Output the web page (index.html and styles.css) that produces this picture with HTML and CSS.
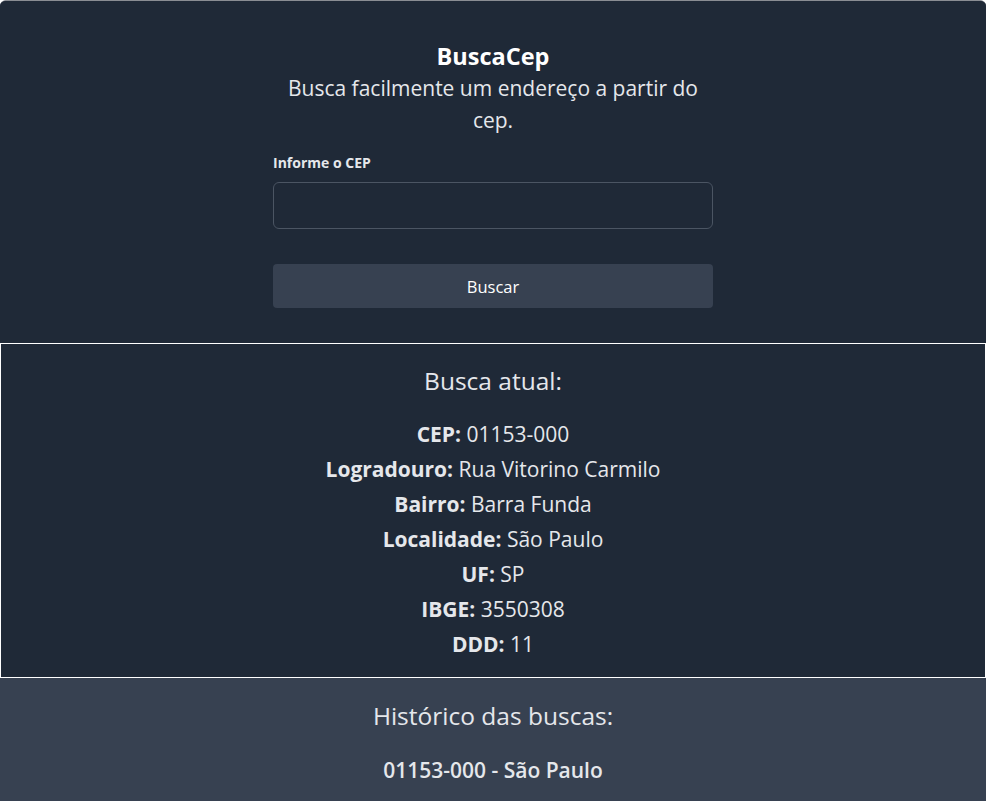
FILE: index.html
```html
<!DOCTYPE html>
<html lang="pt-BR">
<head>
<meta charset="utf-8">
<title>BuscaCep</title>
<link rel="stylesheet" href="styles.css">
</head>
<body>
<main class="app">
  <section class="hero">
    <div class="hero-inner">
      <h1 class="title">BuscaCep</h1>
      <p class="subtitle">Busca facilmente um endereço a partir do cep.</p>
      <form class="form">
        <label class="label" for="cep">Informe o CEP</label>
        <input class="input" id="cep" type="text">
        <button class="button" type="button">Buscar</button>
      </form>
    </div>
  </section>
  <section class="current">
    <h2 class="section-title">Busca atual:</h2>
    <ul class="result">
      <li><strong>CEP:</strong> 01153-000</li>
      <li><strong>Logradouro:</strong> Rua Vitorino Carmilo</li>
      <li><strong>Bairro:</strong> Barra Funda</li>
      <li><strong>Localidade:</strong> São Paulo</li>
      <li><strong>UF:</strong> SP</li>
      <li><strong>IBGE:</strong> 3550308</li>
      <li><strong>DDD:</strong> 11</li>
    </ul>
  </section>
  <section class="history">
    <h2 class="section-title">Histórico das buscas:</h2>
    <ul class="history-list">
      <li>01153-000 - São Paulo</li>
    </ul>
  </section>
</main>
</body>
</html>
```

FILE: styles.css
```css
* { box-sizing: border-box; }

html, body {
  margin: 0;
  background: #ffffff;
}

body {
  font-family: "Open Sans", "Noto Sans", "Liberation Sans", sans-serif;
  color: #e5e7eb;
}

.app {
  border-top: 1px solid #8a8d93;
  border-radius: 6px 6px 0 0;
  overflow: hidden;
  background: #374151;
  min-height: 801px;
}

.hero {
  background: #1f2937;
  padding: 41px 0 35px;
}

.hero-inner {
  width: 440px;
  margin: 0 auto;
  display: flex;
  flex-direction: column;
  align-items: stretch;
}

.title {
  margin: 0;
  font-size: 23.5px;
  line-height: 28px;
  font-weight: 700;
  text-align: center;
  color: #ffffff;
}

.subtitle {
  margin: 2px auto 0;
  max-width: 420px;
  font-size: 21px;
  line-height: 32px;
  text-align: center;
  color: #e5e7eb;
}

.form {
  display: flex;
  flex-direction: column;
  margin-top: 17px;
}

.label {
  font-size: 14px;
  line-height: 20px;
  font-weight: 700;
  color: #e5e7eb;
  margin-bottom: 9px;
}

.input {
  height: 47px;
  border: 1px solid #4b5563;
  border-radius: 6px;
  background: #1f2937;
  color: #f9fafb;
  font: inherit;
  padding: 0 12px;
}

.button {
  margin-top: 35px;
  height: 44px;
  border: 0;
  border-radius: 4px;
  background: #374151;
  color: #ffffff;
  font-family: inherit;
  font-size: 16.5px;
}

.current {
  background: #1f2937;
  border: 1px solid #ffffff;
  padding: 21px 0 15px;
  text-align: center;
}

.section-title {
  margin: 0;
  font-size: 24.5px;
  line-height: 32px;
  font-weight: 400;
  color: #e5e7eb;
}

.result {
  list-style: none;
  margin: 20px 0 0;
  padding: 0;
  font-size: 21px;
  line-height: 35px;
}

.result strong { font-weight: 700; }

.history {
  background: #374151;
  padding: 22px 0 20px;
  text-align: center;
}

.history-list {
  list-style: none;
  margin: 24px 0 0;
  padding: 0;
  font-size: 21px;
  line-height: 28px;
  font-weight: 600;
}
```
